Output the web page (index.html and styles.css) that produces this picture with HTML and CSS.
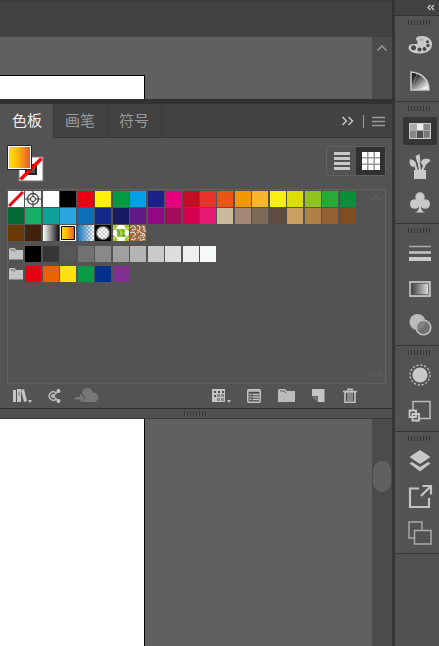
FILE: index.html
```html
<!DOCTYPE html>
<html lang="zh-CN">
<head>
  <meta charset="UTF-8">
  <meta name="viewport" content="width=device-width, initial-scale=1.0">
  <title>色板</title>
  <link rel="stylesheet" href="styles.css">
</head>
<body>
  <div class="app">
    <main class="workspace">
      <div class="topbar"></div>
      <div class="canvas canvas-top">
        <div class="artboard artboard-start"></div>
        <div class="scrollbar">
          <svg width="12" height="8" viewBox="0 0 12 8"><path d="M1.500 6.500 6 2l4.500 4.500" fill="none" stroke="#999" stroke-width="1.500"/></svg>
        </div>
      </div>

      <section class="panel">
        <div class="panel-header">
          <div class="tabs" role="tablist">
            <button class="tab active" role="tab" aria-selected="true">色板</button>
            <button class="tab" role="tab">画笔</button>
            <button class="tab" role="tab">符号</button>
          </div>
          <div class="panel-menu">
            <button class="icon-btn" aria-label="折叠">
              <svg width="14" height="10" viewBox="0 0 14 10"><path d="M1.500 1l4 4-4 4M7.500 1l4 4-4 4" fill="none" stroke="#c4c4c4" stroke-width="1.500"/></svg>
            </button>
            <span class="divider"></span>
            <button class="icon-btn" aria-label="菜单">
              <svg width="14" height="11" viewBox="0 0 14 11"><path d="M0 1.500h13M0 5.500h13M0 9.500h13" stroke="#999" stroke-width="1.300"/></svg>
            </button>
          </div>
        </div>

        <div class="panel-tools">
          <button class="icon-btn" aria-label="填色和描边">
            <svg width="37" height="37" viewBox="0 0 37 37">
              <defs>
                <linearGradient id="fill"><stop offset="0" stop-color="#ffe100"/><stop offset=".4" stop-color="#fbb90f"/><stop offset="1" stop-color="#ea5a2b"/></linearGradient>
              </defs>
              <path d="M12 12h24v24H12z" fill="#fff" stroke="#777"/>
              <path d="M19 20h10v9H19z" fill="#535353" stroke="#222" stroke-width="2"/>
              <path d="M13.500 34.500l21-21" stroke="#f00" stroke-width="3.500"/>
              <path d="M.5.5h24v24H.5z" fill="#fff" stroke="#222"/>
              <path d="M2 2h21v21H2z" fill="url(#fill)"/>
            </svg>
          </button>
          <div class="view-toggle">
            <button class="toggle" aria-label="列表视图">
              <svg width="16" height="18" viewBox="0 0 16 18"><path d="M0 1.500h16M0 6.500h16M0 11.500h16M0 16.500h16" stroke="#c9c9c9" stroke-width="3"/></svg>
            </button>
            <button class="toggle active" aria-label="缩览图视图">
              <svg width="18" height="18" viewBox="0 0 18 18"><path d="M0 0h18v18H0z" fill="#999"/><path d="M0 0h5v5H0zM6.500 0h5v5h-5zM13 0h5v5h-5zM0 6.500h5v5H0zM6.500 6.500h5v5h-5zM13 6.500h5v5h-5zM0 13h5v5H0zM6.500 13h5v5h-5zM13 13h5v5h-5z" fill="#fff"/></svg>
            </button>
          </div>
        </div>

        <div class="swatch-list">
          <div class="swatch-groups" id="swatches"></div>
          <div class="list-scroll">
            <svg width="12" height="7" viewBox="0 0 12 7"><path d="M1 6l5-4 5 4" fill="none" stroke="#5b5b5b" stroke-width="2"/></svg>
            <svg width="12" height="7" viewBox="0 0 12 7"><path d="M1 1l5 4 5-4" fill="none" stroke="#5b5b5b" stroke-width="2"/></svg>
          </div>
        </div>

        <div class="panel-footer">
          <div class="actions">
            <button class="action" aria-label="色板库">
              <svg width="20" height="16" viewBox="0 0 20 16"><path d="M1 2h3v12H1zM5 1h4v13H5z" fill="#c4c4c4"/><path d="M7 4v4" stroke="#777"/><path d="M9 2l3-1 3 12-3 1z" fill="#c4c4c4"/><path d="M16 12h4l-2 3z" fill="#c4c4c4"/></svg>
            </button>
            <button class="action" aria-label="颜色主题">
              <svg width="14" height="16" viewBox="0 0 14 16"><g fill="none" stroke="#bbb"><path d="M9.500 5a4.300 4.300 0 1 0 0 6" stroke-width="1.500"/><path d="M6 8l5-4.500M6 8l5 4.500" stroke-width="1.200"/></g><circle cx="6" cy="8" r="2" fill="#bbb"/><circle cx="11.500" cy="3" r="2" fill="#c4c4c4"/><circle cx="11.500" cy="13" r="2" fill="#c4c4c4"/></svg>
            </button>
            <button class="action" aria-label="添加到库">
              <svg width="24" height="16" viewBox="0 0 24 16"><path d="M9 14a4 4 0 0 1-1-1l4-3-4-4a5.500 5.500 0 0 1 11-1 3.500 3.500 0 0 1 2.500 0A4.800 4.800 0 0 1 21 14z" fill="#777"/><path d="M1 9h5V6l5 4.500L6 14v-2.500H1z" fill="#777"/></svg>
            </button>
          </div>
          <div class="actions">
            <button class="action" aria-label="色板类型">
              <svg width="20" height="16" viewBox="0 0 20 16"><path d="M0 1h13v13H0z" fill="#c4c4c4"/><path d="M2 3h2v2H2zM6 3h2v2H6zM10 3h2v2h-2zM2 7h2v2H2z" fill="#555"/><path d="M5 6h3v3H5zM9 6h3v3H9zM5 10h3v3H5zM9 10h3v3H9z" fill="#8a8a8a"/><path d="M15 12h4l-2 3z" fill="#c4c4c4"/></svg>
            </button>
            <button class="action" aria-label="色板选项">
              <svg width="14" height="16" viewBox="0 0 14 16"><rect x=".8" y="1.800" width="12.400" height="12.400" rx="1" fill="#4a4a4a" stroke="#c4c4c4" stroke-width="1.600"/><path d="M1 3h12M2.500 6.500h2M5.500 6.500H12M2.500 9h2M5.500 9H12M2.500 11.500h2M5.500 11.500H12" stroke="#c4c4c4" stroke-width="1.400"/></svg>
            </button>
            <button class="action" aria-label="新建颜色组">
              <svg width="17" height="16" viewBox="0 0 17 16"><path d="M0 2.500 1 1h6l2 2h8v11H0z" fill="#bbb"/><path d="M2 3h4l2 2" fill="none" stroke="#666"/></svg>
            </button>
            <button class="action" aria-label="新建色板">
              <svg width="14" height="16" viewBox="0 0 14 16"><path d="M1 1h12.500v13H7V8H1z" fill="#c4c4c4"/><path d="M1 8.500 6.500 14V8.500z" fill="#777"/></svg>
            </button>
            <button class="action" aria-label="删除色板">
              <svg width="14" height="16" viewBox="0 0 14 16"><path d="M0 3.500h14M5 3V1.200h4V3" fill="none" stroke="#c4c4c4" stroke-width="1.500"/><path d="M2 4h10v10.200H2z" fill="#4a4a4a" stroke="#c4c4c4" stroke-width="1.600"/><path d="M5 5v8M7 5v8M9 5v8" stroke="#c4c4c4"/></svg>
            </button>
          </div>
        </div>
      </section>

      <div class="resize-bar"><div class="grip"></div></div>

      <div class="canvas canvas-bottom">
        <div class="artboard"></div>
        <div class="scrollbar">
          <div class="thumb"></div>
        </div>
      </div>
    </main>

    <aside class="dock">
      <div class="dock-header">
        <svg width="8" height="7" viewBox="0 0 8 7"><path d="M3.500 1 1 3.500 3.500 6M7 1 4.500 3.500 7 6" fill="none" stroke="#ccc" stroke-width="1.300"/></svg>
      </div>

      <div class="dock-group">
        <div class="grip"></div>
        <button class="dock-btn" aria-label="颜色">
          <svg width="26" height="24" viewBox="0 0 26 24"><path d="M14.500 3C20 2.700 25 6 25 11c0 6-5 9.500-11.500 9.500C7 20.500 1.500 18.500 1.500 15c0-3 2.500-4.500 5.500-4 2 .3 3.700 0 3.700-1.500C10.700 7.500 9 7.500 9 6c0-2 2.500-2.900 5.500-3z" fill="#c9c9c9"/><g fill="#484848"><circle cx="6.500" cy="14.800" r="2.500"/><circle cx="12.500" cy="16.500" r="2"/><circle cx="17.500" cy="16" r="1.900"/><circle cx="21" cy="12.500" r="1.700"/><circle cx="20.500" cy="8.700" r="1.500"/></g><ellipse cx="14.500" cy="6.500" rx="2" ry="1.300" fill="#aaa"/></svg>
        </button>
        <button class="dock-btn" aria-label="颜色参考">
          <svg width="22" height="22" viewBox="0 0 22 22"><defs><linearGradient id="fan" x1="0" y1="0" x2=".8" y2="1"><stop offset=".2" stop-color="#222"/><stop offset=".5" stop-color="#666"/><stop offset=".9" stop-color="#eee"/></linearGradient></defs><path d="M2 2c11 1 18 8 18 18H2z" fill="url(#fan)" stroke="#ccc" stroke-width="1.500"/><path d="M2 20 8 4M2 20 13 7M2 20l15-9M2 20l17-5" stroke="#aaa" stroke-width=".5"/></svg>
        </button>
      </div>

      <div class="dock-group">
        <div class="grip"></div>
        <button class="dock-btn active" aria-label="色板">
          <svg width="22" height="16" viewBox="0 0 22 16"><path d="M.7.700h20.600v14.600H.7z" fill="#777" stroke="#ccc" stroke-width="1.300"/><path d="M8 1h6v6H8z" fill="#ededed"/><path d="M15 1h6v6h-6zM1 8h6v7H1z" fill="#888"/><path d="M1 1h6v6H1z" fill="#aaa"/><path d="M8 8h6v7H8z" fill="#505050"/><path d="M7.500 1v14M14.500 1v14M1 7.500h20" stroke="#aaa"/></svg>
        </button>
        <button class="dock-btn" aria-label="画笔">
          <svg width="22" height="28" viewBox="0 0 22 28"><path d="M5 17h12v9H5z" fill="#c9c9c9"/><path d="M8 18 5 9M11 18 9.500 8M13 18l4-9" stroke="#c9c9c9" stroke-width="2.200"/><path d="M1 6c3.500 1 6 2 6 6l-3 2C1 13 0 10 1 6zM6.500 3l4-2 1 8H8zM12 10c0-4 4-5 8-4l1.500 2c-3 2-5 5-7.500 5z" fill="#c9c9c9"/></svg>
        </button>
        <button class="dock-btn" aria-label="符号">
          <svg width="22" height="24" viewBox="0 0 22 24"><g fill="#c9c9c9"><circle cx="11" cy="6" r="4.700"/><circle cx="5.800" cy="13" r="4.800"/><circle cx="16.200" cy="13" r="4.800"/><path d="M9.500 9h3l-.5 7c.3 3 1.500 5 4 5.500H6c2.500-.5 3.700-2.500 4-5.500z"/></g></svg>
        </button>
      </div>

      <div class="dock-group">
        <div class="grip"></div>
        <button class="dock-btn" aria-label="描边">
          <svg width="22" height="16" viewBox="0 0 22 16"><path d="M0 1.500h22" stroke="#aaa" stroke-width="1.500"/><path d="M0 7.500h22" stroke="#c4c4c4" stroke-width="2.500"/><path d="M0 14h22" stroke="#c9c9c9" stroke-width="4"/></svg>
        </button>
        <button class="dock-btn" aria-label="渐变">
          <svg width="22" height="16" viewBox="0 0 22 16"><defs><linearGradient id="ramp"><stop offset="0" stop-color="#333"/><stop offset="1" stop-color="#ededed"/></linearGradient></defs><path d="M1 1h20v14H1z" fill="url(#ramp)" stroke="#bbb" stroke-width="1.800"/><path d="M2.400 2.400h17.200v11.200H2.400z" fill="none" stroke="#555" stroke-width=".8"/></svg>
        </button>
        <button class="dock-btn" aria-label="透明度">
          <svg width="24" height="24" viewBox="0 0 24 24"><circle cx="9.500" cy="9" r="8" fill="#bbb"/><circle cx="15.500" cy="14.500" r="7.300" fill="#777" fill-opacity=".85" stroke="#bbb" stroke-width="1.600"/></svg>
        </button>
      </div>

      <div class="dock-group">
        <div class="grip"></div>
        <button class="dock-btn" aria-label="外观">
          <svg width="24" height="24" viewBox="0 0 24 24"><circle cx="12" cy="12" r="7.600" fill="#c9c9c9"/><circle cx="12" cy="12" r="10" fill="none" stroke="#bbb" stroke-width="1.300" stroke-dasharray="2.300 1.627"/></svg>
        </button>
        <button class="dock-btn" aria-label="图形样式">
          <svg width="24" height="22" viewBox="0 0 24 22"><path d="M5 1.500h17v17H5z" fill="none" stroke="#bbb" stroke-width="1.500"/><path d="M1.500 10.500h6.500v6.500H1.500zM4.500 14h6.500v6.500H4.500z" fill="#535353" stroke="#c9c9c9" stroke-width="1.800"/></svg>
        </button>
      </div>

      <div class="dock-group">
        <div class="grip"></div>
        <button class="dock-btn" aria-label="图层">
          <svg width="22" height="22" viewBox="0 0 22 22"><path d="M11 0l10.500 7L11 14 .5 7z" fill="#c9c9c9"/><path d="M.5 13.500 3 12l8 5 8-5 2.500 1.500L11 21.500z" fill="#c4c4c4"/></svg>
        </button>
        <button class="dock-btn" aria-label="资源导出">
          <svg width="26" height="26" viewBox="0 0 26 26"><path d="M12 4.500H3V23h19v-9" fill="none" stroke="#c4c4c4" stroke-width="2.200"/><path d="M14 12 23 3M15.500 2H24v8.500" fill="none" stroke="#c4c4c4" stroke-width="2.200"/></svg>
        </button>
        <button class="dock-btn" aria-label="画板">
          <svg width="24" height="24" viewBox="0 0 24 24"><path d="M1 1h13v16H1z" fill="none" stroke="#aaa" stroke-width="1.400"/><path d="M6.500 9.500h16.500V23H6.500z" fill="#535353" stroke="#aaa" stroke-width="1.500"/></svg>
        </button>
      </div>
    </aside>
  </div>
  <script src="script.js"></script>
</body>
</html>
```

FILE: styles.css
```css
* {
  box-sizing: border-box;
}
body {
  margin: 0;
  background-color: #606060;
  font-family: "Noto Sans CJK SC", sans-serif;
}
button {
  margin: 0;
  padding: 0;
  border: none;
  background: none;
  font-family: inherit;
  cursor: pointer;
}
svg {
  display: block;
}
.app {
  display: flex;
  min-height: 100vh;
}
.workspace {
  flex: 1;
  min-width: 0;
  display: flex;
  flex-direction: column;
}

/* Document area */
.topbar {
  height: 37px;
  background-color: #424242;
  border-top: 2px solid #3a3a3a;
  border-right: 1px solid #333;
}
.canvas {
  display: flex;
  background-color: #606060;
  border-right: 1px solid #383838;
}
.canvas-top {
  height: 62px;
}
.canvas-bottom {
  flex: 1;
}
.artboard {
  width: 145px;
  background-color: #fff;
  border-right: 1px solid #000;
}
.artboard-start {
  margin-top: 38px;
  border-top: 1px solid #000;
}
.scrollbar {
  width: 20px;
  margin-left: auto;
  padding-top: 7px;
  display: flex;
  justify-content: center;
  background-color: #4b4b4b;
}
.thumb {
  width: 18px;
  height: 31px;
  margin-top: 35px;
  border-radius: 9px;
  background-color: #606060;
}

/* Swatches panel */
.panel {
  background-color: #535353;
  border-top: 5px solid #323232;
  border-right: 1px solid #3a3a3a;
  border-bottom: 1px solid #2d2d2d;
}
.panel-header {
  display: flex;
  justify-content: space-between;
  height: 34px;
  background-color: #424242;
  box-shadow: inset 0 -1px #383838;
}
.tabs {
  display: flex;
}
.tab {
  padding: 0 12px 3px 11px;
  border-right: 1px solid #3b3b3b;
  font-size: 15px;
  line-height: 31px;
  color: #999;
}
.tab.active {
  padding-left: 12px;
  padding-right: 11px;
  background-color: #535353;
  color: #f0f0f0;
}
.panel-menu {
  display: flex;
  align-items: center;
  gap: 8px;
  padding-right: 6px;
}
.divider {
  width: 1px;
  height: 13px;
  background-color: #a0a0a0;
}
.panel-tools {
  display: flex;
  align-items: center;
  justify-content: space-between;
  height: 51px;
  padding: 0 6px 0 7px;
}
.view-toggle {
  display: flex;
  margin-bottom: 6px;
  border: 1px solid #616161;
  border-radius: 3px;
}
.toggle {
  display: flex;
  align-items: center;
  justify-content: center;
  width: 29px;
  height: 28px;
}
.toggle.active {
  background-color: #303030;
}
.swatch-list {
  display: flex;
  justify-content: space-between;
  height: 195px;
  margin: 0 6px 0 7px;
  border: 1px solid #616161;
}
.swatch-groups {
  width: 349px;
  padding-top: 1px;
}
.swatch-group {
  display: grid;
  grid-template-columns: repeat(20, 1fr);
  row-gap: 1px;
  margin-bottom: 4px;
}
.swatch-group:first-child {
  margin-bottom: 5px;
}
.swatch {
  width: 16px;
  height: 16px;
}
.list-scroll {
  display: flex;
  flex-direction: column;
  justify-content: space-between;
  padding: 4px 3px;
}
.panel-footer {
  display: flex;
  justify-content: space-between;
  height: 24px;
  padding: 0 26px 0 6px;
}
.actions {
  display: flex;
}
.action {
  display: flex;
  align-items: center;
  justify-content: center;
  width: 32px;
}
.resize-bar {
  display: flex;
  justify-content: center;
  height: 10px;
  padding-top: 2px;
  background-color: #505050;
  border-right: 1px solid #383838;
  border-bottom: 1px solid #383838;
}

/* Row of small vertical ticks */
.grip {
  width: 24px;
  height: 5px;
  background: repeating-linear-gradient(to right, #363636 0 1px, #535353 1px 3px);
}

/* Icon dock */
.dock {
  width: 46px;
  background-color: #505050;
  border-left: 2px solid #353535;
}
.dock-header {
  display: flex;
  align-items: center;
  justify-content: flex-end;
  height: 16px;
  padding-right: 4px;
  background-color: #424242;
  border-bottom: 1px solid #333;
}
.dock-group {
  display: flex;
  flex-direction: column;
  align-items: center;
  padding: 4px 0 2px 5px;
  background-color: #535353;
  border-bottom: 1px solid #363636;
}
.dock-group .grip {
  margin-bottom: 2px;
}
.dock-btn {
  display: flex;
  align-items: center;
  justify-content: center;
  width: 34px;
  height: 36px;
}
.dock-btn.active {
  height: 28px;
  margin: 4px 0;
  border-radius: 2px;
  background-color: #363636;
}
```

FILE: script.js
```js
const groups = [
  [
    'none', 'registration', '#ffffff', '#000000', '#e60012', '#fff100', '#009944', '#00a0e9', '#1d2088', '#e4007f',
    '#c30d23', '#e83428', '#e95513', '#f39800', '#f9b52b', '#faee13', '#dcde00', '#8fc31f', '#25ab38', '#07903c',
    '#006934', '#16ae67', '#0ca29a', '#2ba6e1', '#0d6eb8', '#122a88', '#171c61', '#601986', '#920783', '#a40b5d',
    '#d60050', '#e71a75', '#c9bc9c', '#a38878', '#7b6a56', '#604c3f', '#c99f62', '#b08146', '#956034', '#7f4d21',
    '#6a3906', '#40220f', 'gray', 'sunset', 'sky', 'vignette', 'foliage', 'ornament'
  ],
  [
    'folder', '#000000', '#383735', '#595755', '#727171', '#898989', '#9fa0a0', '#b5b5b6', '#c9caca', '#dcdddd',
    '#eeefef', '#f7f8f8'
  ],
  ['folder', '#e80013', '#ec6100', '#ffe20c', '#0a9b45', '#04308e', '#80308e']
];

const icons = {
  none: '<path d="M0 0h16v16H0z" fill="#fff"/><path d="M1 15 15 1" stroke="#f00010" stroke-width="3"/>',
  registration: '<path d="M0 0h16v16H0z" fill="#eee"/><g fill="none" stroke="#444"><circle cx="8" cy="8" r="5.500" stroke-width="1.300"/><circle cx="8" cy="8" r="2.500"/><path d="M8 0v6M8 10v6M0 8h6M10 8h6"/></g>',
  gray: '<linearGradient id="gray"><stop offset="0" stop-color="#fff"/><stop offset="1" stop-color="#111"/></linearGradient><path d="M0 0h16v16H0z" fill="url(#gray)"/>',
  sunset: '<path d="M0 0h16v16H0z" fill="#fff"/><path d="M1.500 1.500h13v13h-13z" fill="url(#fill)" stroke="#000"/>',
  sky: '<pattern id="check" width="4" height="4" patternUnits="userSpaceOnUse"><path d="M0 0h4v4H0z" fill="#fff"/><path d="M0 0h2v2H0zM2 2h2v2H2z" fill="#ccc"/></pattern><linearGradient id="sky"><stop offset="0" stop-color="#1878be"/><stop offset="1" stop-color="#1878be" stop-opacity="0"/></linearGradient><path d="M0 0h16v16H0z" fill="url(#check)"/><path d="M0 0h16v16H0z" fill="url(#sky)"/>',
  vignette: '<radialGradient id="vig"><stop offset=".65" stop-opacity="0"/><stop offset=".95"/></radialGradient><path d="M0 0h16v16H0z" fill="url(#check)"/><path d="M0 0h16v16H0z" fill="url(#vig)"/>',
  foliage: '<path d="M0 0h16v16H0z" fill="#fff"/><g fill="#8fc63a"><path d="M4 4h8v8H4z"/><path d="M0 0h5L3 4 0 6zM16 0v6l-3-2-2-4zM0 10l3 2 2 4H0zM16 10v6h-5l2-4z"/></g><path d="M5 10l6-5M5 6l6 5M4 4v2M12 10v2" stroke="#339646"/><g fill="#f4d32c"><path d="M0 2h2v2H0zM3 0h2v1H3zM14 2h2v2h-2zM11 0h2v1h-2zM0 12h2v2H0zM14 12h2v2h-2zM3 15h2v1H3zM11 15h2v1h-2z"/></g><path d="M7 6h2v4H7z" fill="#c2cf35"/>',
  ornament: '<path d="M0 0h16v16H0z" fill="#9c6c4b"/><path d="M0 3q3-4 5-1t-3 3M7 0q4 1 3 4t-3 1M12 1q3 0 2 3t2 2M0 8q3-2 5 0t-2 4M7 8q2-3 5 0t-2 3M13 8l2 2-2 3M1 14q3 2 5-1M8 13q3-1 3 3M12 15l3-1" fill="none" stroke="#f5e6d8"/>',
  folder: '<path d="M1 3.500 2 2h4.500L8 4h7v9.500H1z" fill="#c4c4c4"/><path d="M2.500 4h3.300L7 5.500" fill="none" stroke="#666"/>'
};

const list = document.getElementById('swatches');

groups.forEach(colors => {
  const group = document.createElement('div');
  group.className = 'swatch-group';
  colors.forEach(color => {
    const swatch = document.createElement('button');
    swatch.className = 'swatch';
    swatch.setAttribute('aria-label', color);
    if (icons[color]) {
      swatch.innerHTML = `<svg width="16" height="16" viewBox="0 0 16 16">${icons[color]}</svg>`;
    } else {
      swatch.style.backgroundColor = color;
    }
    group.appendChild(swatch);
  });
  list.appendChild(group);
});
```
